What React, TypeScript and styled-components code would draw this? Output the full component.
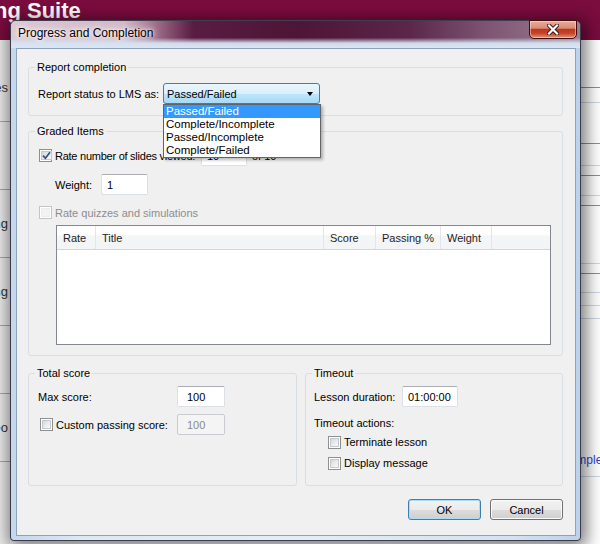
import styled, { createGlobalStyle } from 'styled-components';

const GlobalStyle = createGlobalStyle`
  html, body {
    margin: 0;
    padding: 0;
  }
  body {
    font-family: 'Liberation Sans', Arial, sans-serif;
    font-size: 11px;
    color: #000;
  }
  *, *::before, *::after {
    box-sizing: border-box;
  }
`;

const statusOptions = ['Passed/Failed', 'Complete/Incomplete', 'Passed/Incomplete', 'Complete/Failed'];

const columns = [
  { title: 'Rate', width: 39 },
  { title: 'Title', width: 228 },
  { title: 'Score', width: 52 },
  { title: 'Passing %', width: 65 },
  { title: 'Weight', width: 51 },
];

// rows of the app behind the dialog, only their edges peek out
const sideItems = ['Courses', '', 'Sorting', 'Grading', '', 'Video'];

const mainRows: { h: number; tone: 'dark' | 'light'; link?: string }[] = [
  { h: 48, tone: 'dark' },
  { h: 15, tone: 'light' },
  { h: 41, tone: 'dark' },
  { h: 22, tone: 'light' },
  { h: 10, tone: 'dark' },
  { h: 20, tone: 'light' },
  { h: 9, tone: 'dark' },
  { h: 58, tone: 'light' },
  { h: 9, tone: 'dark' },
  { h: 19, tone: 'light' },
  { h: 13, tone: 'light' },
  { h: 13, tone: 'light' },
  { h: 158, tone: 'light', link: 'Complete' },
];

const Check = ({ checked, disabled }: { checked?: boolean; disabled?: boolean }) => (
  <CheckBox $disabled={disabled}>
    <CheckFace $disabled={disabled}>
      {checked && (
        <svg width="9" height="9" viewBox="0 0 9 9">
          <path d="M1 4.6 L3.4 7.2 L8 1.2" fill="none" stroke="#3b4f7b" strokeWidth="1.7" />
        </svg>
      )}
    </CheckFace>
  </CheckBox>
);

export default function App() {
  return (
    <>
      <GlobalStyle />
      <Desktop>
        <AppHeader>
          <AppTitle>ng Suite</AppTitle>
        </AppHeader>
        <AppBody>
          <SideList>
            {sideItems.map((item, i) => (
              <SideItem key={i}>{item}</SideItem>
            ))}
          </SideList>
          <MainList>
            {mainRows.map((row, i) => (
              <MainRow key={i} $h={row.h} $tone={row.tone}>
                {row.link && <RowLink>{row.link}</RowLink>}
              </MainRow>
            ))}
          </MainList>
        </AppBody>

        <Window>
          <TitleBar>
            <WindowTitle>Progress and Completion</WindowTitle>
            <CloseButton aria-label="Close">
              <svg width="12" height="11" viewBox="0 0 12 11">
                <path d="M2 1.5 L10 9.5 M10 1.5 L2 9.5" stroke="#3a1010" strokeWidth="4" strokeLinecap="square" />
                <path d="M2 1.5 L10 9.5 M10 1.5 L2 9.5" stroke="#fff" strokeWidth="2.2" strokeLinecap="square" />
              </svg>
            </CloseButton>
          </TitleBar>

          <Client>
            <Group>
              <Legend>Report completion</Legend>
              <GroupBody $pad="9px 9px 11px">
                <Row>
                  <FieldLabel $w={125}>Report status to LMS as:</FieldLabel>
                  <ComboWrap>
                    <Combo>
                      <span>Passed/Failed</span>
                      <ComboArrow />
                    </Combo>
                    <ComboList>
                      {statusOptions.map((opt, i) => (
                        <ComboItem key={opt} $selected={i === 0}>
                          {opt}
                        </ComboItem>
                      ))}
                    </ComboList>
                  </ComboWrap>
                </Row>
              </GroupBody>
            </Group>

            <Group $mt={8}>
              <Legend>Graded Items</Legend>
              <GroupBody $pad="7px 10px 10px">
                <Row>
                  <CheckLabel>
                    <Check checked />
                    <SlidesText>Rate number of slides viewed:</SlidesText>
                  </CheckLabel>
                  <TextBox $w={46} defaultValue="10" readOnly />
                  <Spacer $w={5} />
                  <span>of 10</span>
                </Row>
                <Row $mt={8} $ml={16}>
                  <FieldLabel $w={46}>Weight:</FieldLabel>
                  <TextBox $w={47} defaultValue="1" readOnly />
                </Row>
                <Row $mt={7}>
                  <CheckLabel $disabled>
                    <Check disabled />
                    Rate quizzes and simulations
                  </CheckLabel>
                </Row>
                <Table>
                  <TableHead>
                    {columns.map(col => (
                      <HeadCell key={col.title} $w={col.width}>
                        {col.title}
                      </HeadCell>
                    ))}
                    <HeadFiller />
                  </TableHead>
                </Table>
              </GroupBody>
            </Group>

            <BottomRow>
              <Group $w={269}>
                <Legend>Total score</Legend>
                <GroupBody $pad="6px 9px 12px">
                  <Row>
                    <FieldLabel $w={139}>Max score:</FieldLabel>
                    <TextBox $w={48} $indent={9} defaultValue="100" readOnly />
                  </Row>
                  <Row $mt={7} $ml={2}>
                    <CheckLabel $w={137}>
                      <Check />
                      Custom passing score:
                    </CheckLabel>
                    <TextBox $w={48} $indent={9} defaultValue="100" disabled />
                  </Row>
                </GroupBody>
              </Group>

              <Group $grow>
                <Legend>Timeout</Legend>
                <GroupBody $pad="6px 8px 15px">
                  <Row>
                    <FieldLabel $w={88}>Lesson duration:</FieldLabel>
                    <TextBox $w={56} defaultValue="01:00:00" readOnly />
                  </Row>
                  <Row $mt={9} $h={14}>
                    Timeout actions:
                  </Row>
                  <Row $mt={5} $h={14} $ml={14}>
                    <CheckLabel>
                      <Check />
                      Terminate lesson
                    </CheckLabel>
                  </Row>
                  <Row $mt={7} $h={14} $ml={14}>
                    <CheckLabel>
                      <Check />
                      Display message
                    </CheckLabel>
                  </Row>
                </GroupBody>
              </Group>
            </BottomRow>

            <ButtonRow>
              <PushButton $default>OK</PushButton>
              <PushButton>Cancel</PushButton>
            </ButtonRow>
          </Client>
        </Window>
      </Desktop>
    </>
  );
}

const Desktop = styled.div`
  position: relative;
  width: 600px;
  height: 544px;
  overflow: hidden;
  background: #ffffff;
  display: flex;
  flex-direction: column;
`;

const AppHeader = styled.div`
  height: 40px;
  flex: none;
  background: #7a0c3e;
  overflow: hidden;
`;

const AppTitle = styled.div`
  margin-left: -6px;
  color: #ffffff;
  font-family: 'Liberation Sans', Arial, sans-serif;
  font-weight: bold;
  font-size: 22px;
  line-height: 22px;
  white-space: nowrap;
`;

const AppBody = styled.div`
  flex: 1;
  display: flex;
`;

const SideList = styled.div`
  width: 10px;
  flex: none;
  overflow: hidden;
  padding-top: 14px;
  background: #ececec;
`;

const SideItem = styled.div`
  height: 68px;
  display: flex;
  align-items: center;
  justify-content: flex-end;
  padding-right: 2px;
  white-space: nowrap;
  border-bottom: 1px solid #a6a6a6;
  font-size: 13px;
  color: #333333;
`;

const MainList = styled.div`
  flex: 1;
  display: flex;
  flex-direction: column;
`;

const MainRow = styled.div<{ $h: number; $tone: 'dark' | 'light' }>`
  height: ${p => p.$h}px;
  flex: none;
  display: flex;
  align-items: flex-end;
  padding: 0 0 9px 551px;
  border-bottom: 1px solid ${p => (p.$tone === 'dark' ? '#8f8f8f' : '#cdd7e3')};
`;

const RowLink = styled.span`
  font-size: 12px;
  color: #2f3fd6;
  white-space: nowrap;
`;

const Window = styled.div`
  position: absolute;
  left: 10px;
  top: 20px;
  width: 571px;
  height: 521px;
  display: flex;
  flex-direction: column;
  padding: 0 4px 4px 5px;
  border: 1px solid rgba(25, 20, 35, 0.8);
  border-radius: 6px 6px 4px 4px;
  background: linear-gradient(to right, #c3d7ee 0%, #dce8f5 12%, #e4edf7 50%, #d3e2f2 88%, #bcd2ec 100%);
  box-shadow: 2px 3px 16px 4px rgba(0, 0, 0, 0.5);
`;

const TitleBar = styled.div`
  height: 27px;
  flex: none;
  margin: 0 -4px 0 -5px;
  display: flex;
  align-items: flex-start;
  border-radius: 5px 5px 0 0;
  background:
    linear-gradient(to bottom, rgba(220, 232, 245, 0) 62%, rgba(214, 227, 242, 0.95) 82%, #dbe6f3 100%),
    linear-gradient(to right, #dbc9d3 0%, #d2b9c7 20%, #a4748f 25%, #5a1c43 32%, #4d1537 50%, #5b264a 70%, #7e5674 84%, #9c7d95 100%);
`;

const WindowTitle = styled.div`
  padding: 5px 0 0 7px;
  font-size: 12px;
  line-height: 15px;
  color: #000000;
  text-shadow: 0 0 6px #ffffff, 0 0 3px #ffffff, 0 0 10px rgba(255, 255, 255, 0.8);
  white-space: nowrap;
`;

const CloseButton = styled.div`
  margin: -1px 3px 0 auto;
  width: 48px;
  height: 19px;
  display: flex;
  align-items: center;
  justify-content: center;
  border: 1px solid #3d0f0f;
  border-radius: 0 0 5px 5px;
  background: linear-gradient(to bottom, #e9ab9b 0%, #dc8b76 42%, #b9391f 50%, #c64329 72%, #e39576 100%);
  box-shadow: inset 0 0 0 1px rgba(255, 230, 220, 0.5);
`;

const Client = styled.div`
  flex: 1;
  display: flex;
  flex-direction: column;
  padding: 11px 12px 0 11px;
  border: 1px solid #8ea2ba;
  background: #f0f0f0;
`;

const Group = styled.fieldset<{ $mt?: number; $w?: number; $grow?: boolean }>`
  margin: ${p => p.$mt ?? 0}px 0 0;
  padding: 0;
  min-width: 0;
  width: ${p => (p.$w ? `${p.$w}px` : 'auto')};
  flex: ${p => (p.$grow ? 1 : 'none')};
  border: 1px solid #d5dfe5;
  border-radius: 3px;
`;

const Legend = styled.legend`
  margin-left: 6px;
  padding: 0 2px;
  font-size: 11px;
  line-height: 14px;
  color: #000000;
`;

const GroupBody = styled.div<{ $pad: string }>`
  display: flex;
  flex-direction: column;
  padding: ${p => p.$pad};
`;

const Row = styled.div<{ $mt?: number; $ml?: number; $h?: number }>`
  display: flex;
  align-items: center;
  height: ${p => p.$h ?? 21}px;
  margin-top: ${p => p.$mt ?? 0}px;
  margin-left: ${p => p.$ml ?? 0}px;
  white-space: nowrap;
`;

const FieldLabel = styled.span<{ $w: number }>`
  width: ${p => p.$w}px;
  flex: none;
  white-space: nowrap;
`;

const Spacer = styled.span<{ $w: number }>`
  width: ${p => p.$w}px;
  flex: none;
`;

const CheckLabel = styled.label<{ $disabled?: boolean; $w?: number }>`
  display: flex;
  align-items: center;
  gap: 3px;
  flex: none;
  width: ${p => (p.$w ? `${p.$w}px` : 'auto')};
  color: ${p => (p.$disabled ? '#8d8d8d' : '#000000')};
  white-space: nowrap;
`;

const SlidesText = styled.span`
  width: 143px;
  margin-right: 3px;
  letter-spacing: -0.25px;
  white-space: nowrap;
  overflow: hidden;
`;

const CheckBox = styled.span<{ $disabled?: boolean }>`
  flex: none;
  width: 13px;
  height: 13px;
  display: flex;
  padding: 1px;
  border: 1px solid ${p => (p.$disabled ? '#c4c4c4' : '#8e8f8f')};
  background: #ffffff;
`;

const CheckFace = styled.span<{ $disabled?: boolean }>`
  flex: 1;
  display: flex;
  align-items: center;
  justify-content: center;
  border: 1px solid ${p => (p.$disabled ? '#ececec' : '#c4c7cc')};
  background: ${p =>
    p.$disabled ? '#f3f3f3' : 'linear-gradient(135deg, #d3d6da 0%, #ececec 55%, #f9f9f9 100%)'};

  svg {
    overflow: visible;
  }
`;

const TextBox = styled.input<{ $w: number; $indent?: number }>`
  width: ${p => p.$w}px;
  height: 21px;
  flex: none;
  margin: 0;
  padding: 0 0 0 ${p => p.$indent ?? 5}px;
  font-family: 'Liberation Sans', Arial, sans-serif;
  font-size: 11px;
  color: #000000;
  background: #ffffff;
  border: 1px solid #dbdfe6;
  border-top-color: #abadb3;
  border-radius: 2px;
  outline: none;

  &:disabled {
    color: #8a8a8a;
    background: #f4f4f4;
    border-color: #c9cdd2;
  }
`;

const ComboWrap = styled.div`
  position: relative;
  flex: none;
`;

const Combo = styled.div`
  width: 157px;
  height: 21px;
  display: flex;
  align-items: center;
  justify-content: space-between;
  padding: 0 6px 0 3px;
  border: 1px solid #3c7fb1;
  border-radius: 3px;
  background: linear-gradient(to bottom, #eaf6fd 0%, #d9f0fc 50%, #bee6fd 51%, #a7d9f5 100%);
`;

const ComboArrow = styled.span`
  width: 0;
  height: 0;
  border-left: 3.5px solid transparent;
  border-right: 3.5px solid transparent;
  border-top: 4px solid #000000;
`;

const ComboList = styled.div`
  position: absolute;
  left: 0;
  top: 21px;
  width: 158px;
  z-index: 10;
  padding: 0;
  border: 1px solid #646464;
  background: #ffffff;
  box-shadow: 2px 2px 3px rgba(0, 0, 0, 0.28);
`;

const ComboItem = styled.div<{ $selected?: boolean }>`
  height: 13px;
  line-height: 13px;
  padding-left: 2px;
  font-size: 11.5px;
  white-space: nowrap;
  color: ${p => (p.$selected ? '#ffffff' : '#000000')};
  background: ${p => (p.$selected ? '#3399ff' : 'transparent')};
`;

const Table = styled.div`
  margin: 2px 0 0 17px;
  width: 495px;
  height: 120px;
  flex: none;
  border: 1px solid #828790;
  background: #ffffff;
`;

const TableHead = styled.div`
  height: 24px;
  display: flex;
  border-bottom: 1px solid #d5d5d5;
  background: linear-gradient(to bottom, #ffffff 0%, #ffffff 35%, #f4f5f6 45%, #f3f4f5 100%);
`;

const HeadCell = styled.div<{ $w: number }>`
  width: ${p => p.$w}px;
  flex: none;
  display: flex;
  align-items: center;
  padding-left: 6px;
  border-right: 1px solid #e3e5e8;
  color: #1e1e1e;
  white-space: nowrap;
`;

const HeadFiller = styled.div`
  flex: 1;
`;

const BottomRow = styled.div`
  display: flex;
  gap: 8px;
  margin-top: 10px;
`;

const ButtonRow = styled.div`
  display: flex;
  justify-content: flex-end;
  gap: 9px;
  margin-top: 13px;
`;

const PushButton = styled.button<{ $default?: boolean }>`
  width: 73px;
  height: 21px;
  padding: 0;
  font-family: 'Liberation Sans', Arial, sans-serif;
  font-size: 11px;
  color: #000000;
  border: 1px solid ${p => (p.$default ? '#3c7fb1' : '#707070')};
  border-radius: 3px;
  background: linear-gradient(to bottom, #f2f2f2 0%, #ebebeb 50%, #dddddd 51%, #cfcfcf 100%);
  box-shadow: inset 0 0 0 1px ${p => (p.$default ? '#a9dcf5' : '#fbfbfb')};
`;
